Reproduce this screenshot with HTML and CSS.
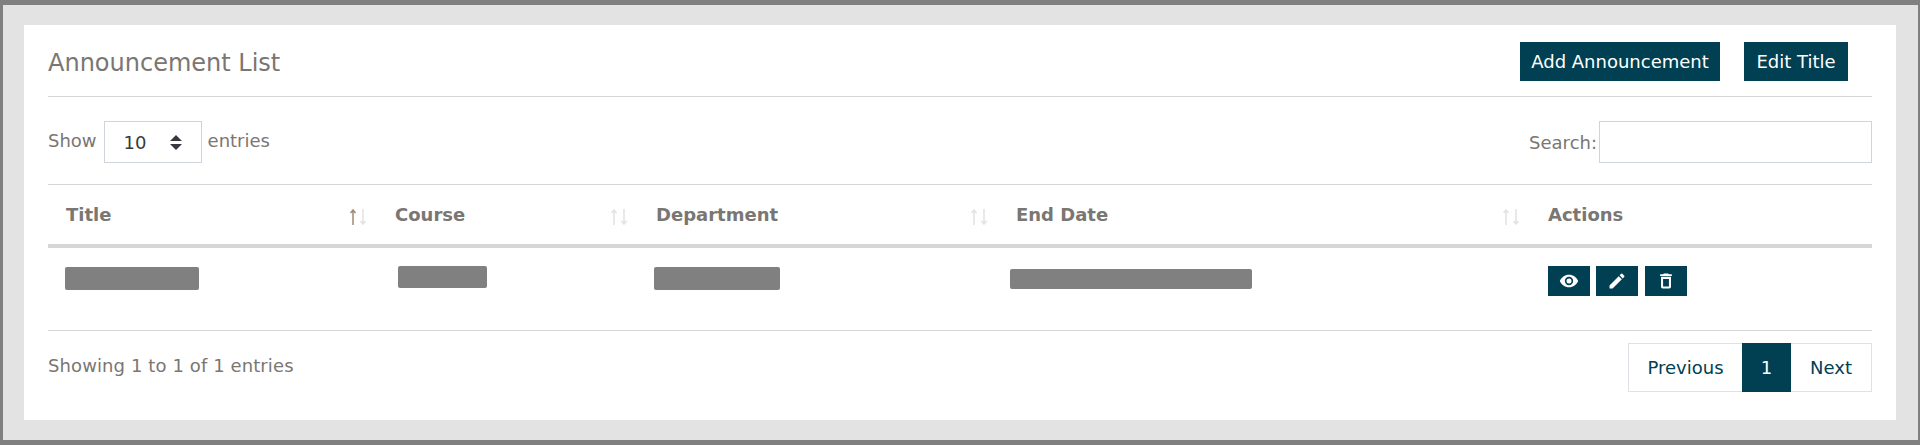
FILE: index.html
```html
<!DOCTYPE html>
<html lang="en">
<head>
  <meta charset="UTF-8" />
  <title>Announcement List</title>
  <link rel="stylesheet" href="styles.css">
</head>
<body>
  <div class="card">
    <div class="card-header">
      <h2>Announcement List</h2>
      <div class="header-actions">
        <button class="btn">Add Announcement</button>
        <button class="btn btn-edit">Edit Title</button>
      </div>
    </div>

    <div class="table-controls">
      <div class="length-control">
        <label class="length-text" for="entries">Show</label>
        <div class="select-wrap">
          <select id="entries">
            <option>10</option>
            <option>25</option>
            <option>50</option>
          </select>
          <svg class="select-arrows" width="12" height="15" viewBox="0 0 12 15"><path d="M6 0l6 6H0zM6 15L0 9h12z" fill="#343a40"/></svg>
        </div>
        <span class="length-text">entries</span>
      </div>
      <div class="search-control">
        <label for="search">Search:</label>
        <input type="text" id="search" />
      </div>
    </div>

    <table>
      <thead>
        <tr>
          <th class="col-title">
            <div class="th-inner">Title
              <svg class="sort" width="16" height="16" viewBox="0 0 16 16"><path class="sort-on" d="M3 16V1M0.5 4L3 1l2.500 3"/><path d="M13 0v15M10.500 12l2.500 3 2.500-3"/></svg>
            </div>
          </th>
          <th class="col-course">
            <div class="th-inner">Course
              <svg class="sort" width="16" height="16" viewBox="0 0 16 16"><path d="M3 16V1M0.500 4L3 1l2.500 3M13 0v15M10.500 12l2.500 3 2.500-3"/></svg>
            </div>
          </th>
          <th class="col-dept">
            <div class="th-inner">Department
              <svg class="sort" width="16" height="16" viewBox="0 0 16 16"><path d="M3 16V1M0.500 4L3 1l2.500 3M13 0v15M10.500 12l2.500 3 2.500-3"/></svg>
            </div>
          </th>
          <th class="col-date">
            <div class="th-inner">End Date
              <svg class="sort" width="16" height="16" viewBox="0 0 16 16"><path d="M3 16V1M0.500 4L3 1l2.500 3M13 0v15M10.500 12l2.500 3 2.500-3"/></svg>
            </div>
          </th>
          <th>Actions</th>
        </tr>
      </thead>
      <tbody>
        <tr>
          <td><span class="redacted r-title"></span></td>
          <td><span class="redacted r-course"></span></td>
          <td><span class="redacted r-dept"></span></td>
          <td><span class="redacted r-date"></span></td>
          <td>
            <div class="row-actions">
              <button class="icon-btn" aria-label="View">
                <svg width="20" height="20" viewBox="0 0 24 24"><path fill="#fff" d="M12 4.500C7 4.500 2.700 7.600 1 12c1.700 4.400 6 7.500 11 7.500s9.300-3.100 11-7.500c-1.700-4.400-6-7.500-11-7.500zM12 17a5 5 0 1 1 0-10 5 5 0 0 1 0 10zm0-8a3 3 0 1 0 0 6 3 3 0 0 0 0-6z"/></svg>
              </button>
              <button class="icon-btn" aria-label="Edit">
                <svg width="20" height="20" viewBox="0 0 24 24"><path fill="#fff" d="M3 17.250V21h3.750L17.810 9.940l-3.750-3.750L3 17.250zM20.710 7.040a1 1 0 0 0 0-1.410l-2.340-2.340a1 1 0 0 0-1.410 0l-1.830 1.830 3.750 3.750 1.830-1.830z"/></svg>
              </button>
              <button class="icon-btn" aria-label="Delete">
                <svg width="20" height="20" viewBox="0 0 24 24"><path fill="#fff" d="M9.500 3l-1 1H5v2h14V4h-3.500l-1-1h-5zM6 7v12a2 2 0 0 0 2 2h8a2 2 0 0 0 2-2V7H6zm2.500 2.500h7V18.500h-7V9.500z"/></svg>
              </button>
            </div>
          </td>
        </tr>
      </tbody>
    </table>

    <div class="table-footer">
      <div class="info">Showing 1 to 1 of 1 entries</div>
      <div class="pagination">
        <a class="page-prev" href="#">Previous</a>
        <a class="page-num" href="#">1</a>
        <a class="page-next" href="#">Next</a>
      </div>
    </div>
  </div>
</body>
</html>
```

FILE: styles.css
```css
* {
  box-sizing: border-box;
}

body {
  margin: 0;
  height: 445px;
  overflow: hidden;
  background-color: #e3e3e3;
  border-style: solid;
  border-color: #808080;
  border-width: 5px 2px 5px 3px;
  padding: 20px 22px 20px 21px;
  font-family: "DejaVu Sans", sans-serif;
  font-size: 18px;
  color: #7a7672;
}

.card {
  background-color: #fff;
  height: 395px;
  padding: 17px 24px 0;
}

.card-header {
  display: flex;
  justify-content: space-between;
  align-items: flex-start;
  height: 55px;
  border-bottom: 1px solid #d6d6d6;
}

h2 {
  margin: 0;
  padding-top: 7px;
  font-size: 24px;
  line-height: 28px;
  font-weight: normal;
}

.header-actions {
  display: flex;
  gap: 24px;
  padding-right: 24px;
}

.btn {
  border: none;
  background-color: #004052;
  color: #fff;
  font-family: inherit;
  font-size: 18px;
  height: 39px;
  padding: 0;
  width: 200px;
}

.btn-edit {
  width: 104px;
}

.table-controls {
  display: flex;
  justify-content: space-between;
  align-items: center;
  height: 88px;
  padding-top: 3px;
  border-bottom: 1px solid #d6d6d6;
}

.length-control,
.search-control {
  display: flex;
  align-items: center;
}

.length-text {
  margin-bottom: 4px;
}

.select-wrap {
  position: relative;
  margin: 0 6px 0 7px;
}

select {
  appearance: none;
  display: block;
  width: 98px;
  height: 42px;
  padding: 0 0 0 19px;
  background: #fff;
  border: 1px solid #ced4da;
  border-radius: 0;
  color: #343a40;
  font-family: inherit;
  font-size: 18px;
}

.select-arrows {
  position: absolute;
  top: 14px;
  right: 20px;
}

.search-control label {
  margin-right: 2px;
}

input {
  width: 273px;
  height: 42px;
  border: 1px solid #ced4da;
}

table {
  width: 100%;
  border-collapse: collapse;
  table-layout: fixed;
}

th {
  height: 61px;
  padding: 0 11px 0 18px;
  border-bottom: 4px solid #d6d6d6;
  text-align: left;
  font-size: 18px;
}

.col-title {
  width: 329px;
}

.col-course {
  width: 261px;
}

.col-dept {
  width: 360px;
}

.col-date {
  width: 532px;
}

.th-inner {
  display: flex;
  justify-content: space-between;
  align-items: center;
}

.sort {
  margin-top: 4px;
  fill: none;
  stroke: #e2e2e2;
  stroke-width: 1.500;
}

.sort .sort-on {
  stroke: #a08a70;
}

td {
  height: 84px;
  padding: 0;
  vertical-align: top;
  border-bottom: 1px solid #d6d6d6;
}

.redacted {
  display: block;
  background-color: #808080;
  border-radius: 2px;
}

.r-title {
  width: 134px;
  height: 23px;
  margin: 19px 0 0 17px;
}

.r-course {
  width: 89px;
  height: 22px;
  margin: 18px 0 0 21px;
}

.r-dept {
  width: 126px;
  height: 23px;
  margin: 19px 0 0 16px;
}

.r-date {
  width: 242px;
  height: 20px;
  margin: 21px 0 0 12px;
}

.row-actions {
  display: flex;
  gap: 6px;
  padding: 18px 0 0 18px;
}

.icon-btn {
  display: flex;
  align-items: center;
  justify-content: center;
  width: 42px;
  height: 30px;
  padding: 0;
  border: none;
  background-color: #004052;
}

.icon-btn:last-child {
  margin-left: 1px;
}

.table-footer {
  display: flex;
  justify-content: space-between;
  align-items: flex-start;
  padding-top: 12px;
}

.info {
  padding-top: 12px;
  letter-spacing: 0.1px;
}

.pagination {
  display: flex;
  height: 49px;
  border: 1px solid #dee2e6;
}

.pagination a {
  display: flex;
  align-items: center;
  justify-content: center;
  color: #004052;
  font-size: 18px;
  text-decoration: none;
}

.page-prev {
  width: 113px;
}

.page-num {
  width: 49px;
  margin: -1px 0;
  background-color: #004052;
  color: #fff !important;
}

.page-next {
  width: 80px;
}
```
